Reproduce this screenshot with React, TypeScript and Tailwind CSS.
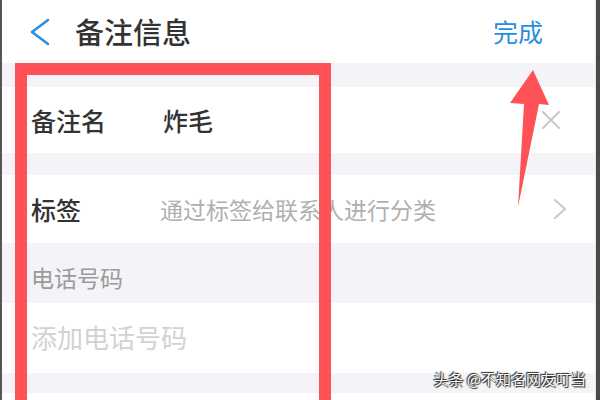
const cjk = { fontFamily: '"Noto Sans CJK SC", "Noto Sans", sans-serif' }

function Gap({ h }: { h: string }) {
  return <div className={`${h} bg-[#f4f4f8]`} />
}

export default function App() {
  return (
    <div
      className="relative h-[400px] w-[600px] overflow-hidden border-l-2 border-r-4 border-l-[#555] border-r-[#4a4a4a] bg-white"
      style={cjk}
    >
      <div className="flex h-full flex-col border-r border-r-[#e6e6e6]">
        {/* header */}
        <div className="flex h-[63px] shrink-0 items-center justify-between pl-[26px] pr-[52px]">
          <div className="flex items-center gap-[23px]">
            <svg width="24" height="28" viewBox="0 0 24 28" className="text-[#2a8de3]">
              <polyline points="20,2 4,14 20,26" fill="none" stroke="currentColor" strokeWidth="2.6" strokeLinecap="round" strokeLinejoin="round" />
            </svg>
            <span className="text-[29px] font-medium leading-none text-[#333]">备注信息</span>
          </div>
          <span className="text-[25px] leading-none text-[#2a8de3]">完成</span>
        </div>

        <Gap h="h-[24px] shrink-0" />

        {/* 备注名 */}
        <div className="flex h-[66px] shrink-0 items-center pl-[29px] pr-[34px]">
          <span className="w-[132px] text-[25px] font-medium leading-none text-[#333]">备注名</span>
          <span className="flex-1 text-[25px] font-medium leading-none text-[#333]">炸毛</span>
          <svg width="20" height="18" viewBox="0 0 20 18" className="text-[#c8c8c8]">
            <path d="M2 1 L18 17 M18 1 L2 17" stroke="currentColor" strokeWidth="2" strokeLinecap="round" />
          </svg>
        </div>

        <Gap h="h-[22px] shrink-0" />

        {/* 标签 */}
        <div className="flex h-[68px] shrink-0 items-center pl-[29px] pr-[28px]">
          <span className="w-[129px] text-[25px] font-medium leading-none text-[#333]">标签</span>
          <span className="flex-1 text-[23px] leading-none text-[#b0b0b0]">通过标签给联系人进行分类</span>
          <svg width="14" height="20" viewBox="0 0 14 20" className="text-[#c8c8c8]">
            <polyline points="2,1 12,10 2,19" fill="none" stroke="currentColor" strokeWidth="2" strokeLinecap="round" strokeLinejoin="round" />
          </svg>
        </div>

        {/* 电话号码 section */}
        <div className="flex h-[60px] shrink-0 items-center bg-[#f4f4f8] pl-[29px] pt-[8px]">
          <span className="text-[23px] leading-none text-[#9a9a9a]">电话号码</span>
        </div>

        <div className="flex h-[70px] shrink-0 items-center pl-[29px] pb-[2px]">
          <span className="text-[26px] leading-none text-[#d2d2d2]">添加电话号码</span>
        </div>

        <Gap h="h-[20px] shrink-0" />
        <div className="flex-1 bg-white" />
      </div>

      {/* red annotation box */}
      <div className="absolute left-[13px] top-[63px] h-[400px] w-[316px] border-[12px] border-b-0 border-[#ff5257]" />

      {/* red arrow */}
      <svg className="absolute left-0 top-0" width="600" height="400" viewBox="0 0 600 400">
        <polygon points="531,70 547,105 537,104 516,207 522,104 508,103" fill="#ff5257" />
      </svg>

      {/* watermark */}
      <div
        className="absolute right-[10px] top-[371px] text-[15px] leading-none text-white"
        style={{ textShadow: '0 0 1px #222, 1px 1px 1px #222, -1px -1px 1px #222' }}
      >
        头条 @不知名网友叮当
      </div>
    </div>
  )
}
